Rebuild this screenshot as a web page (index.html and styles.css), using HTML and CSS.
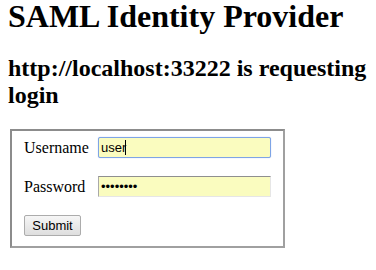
FILE: index.html
```html
<!DOCTYPE html>
<html lang="en">
  <head>
    <meta charset="UTF-8" />
    <title>SAML Identity Provider</title>
    <link rel="stylesheet" href="styles.css">
  </head>
  <body>
    <h1>SAML Identity Provider</h1>
    <h2>http://localhost:33222 is requesting login</h2>
    <form class="login" onsubmit="return false">
      <fieldset>
        <div class="row">
          <label for="username">Username</label>
          <span class="field">
            <input type="text" id="username" class="focused" value="user" />
            <span class="caret"></span>
          </span>
        </div>
        <div class="row">
          <label for="password">Password</label>
          <input type="password" id="password" value="password" />
        </div>
        <div class="row">
          <button type="submit">Submit</button>
        </div>
      </fieldset>
    </form>
  </body>
</html>
```

FILE: styles.css
```css
body {
  margin: 0 8px;
  font-family: "Liberation Serif", "Times New Roman", serif;
  font-size: 16px;
  color: #000;
  background: #fff;
}

h1 {
  font-size: 32px;
  line-height: 32px;
  margin: 0 0 23px;
}

h2 {
  font-size: 24px;
  margin: 20px 0 20px;
}

fieldset {
  width: 246px;
  margin: 0 2px;
  padding: 6px 12px 10px;
  border: 2px solid #8c8c8c;
  border-right-color: #a0a0a0;
  border-bottom-color: #a0a0a0;
  display: flex;
  flex-direction: column;
  gap: 18px;
}

.row {
  display: flex;
  align-items: center;
  height: 21px;
}

label {
  width: 74px;
  flex: none;
}

.field {
  position: relative;
  display: flex;
}

.caret {
  position: absolute;
  left: 27px;
  top: 3px;
  width: 1px;
  height: 15px;
  background: #000;
}

input {
  width: 173px;
  height: 21px;
  box-sizing: border-box;
  padding: 1px 2px;
  font-family: "Liberation Sans", Arial, sans-serif;
  font-size: 13px;
  background: #fafcbf;
  border: 1px solid #a9a9a9;
  border-top-color: #8f8f8f;
  border-bottom-color: #e6e6e6;
  border-right-color: #e6e6e6;
  outline: none;
}

input.focused {
  border: 1px solid #7ea4e6;
  border-radius: 2px;
  box-shadow: 0 0 1px #9ab8ee;
}

button {
  height: 21px;
  width: 57px;
  padding: 0 6px;
  font-family: "Liberation Sans", Arial, sans-serif;
  font-size: 13px;
  color: #000;
  background: linear-gradient(#f6f6f6, #dedede);
  border: 1px solid #acacac;
  border-radius: 2px;
}
```
